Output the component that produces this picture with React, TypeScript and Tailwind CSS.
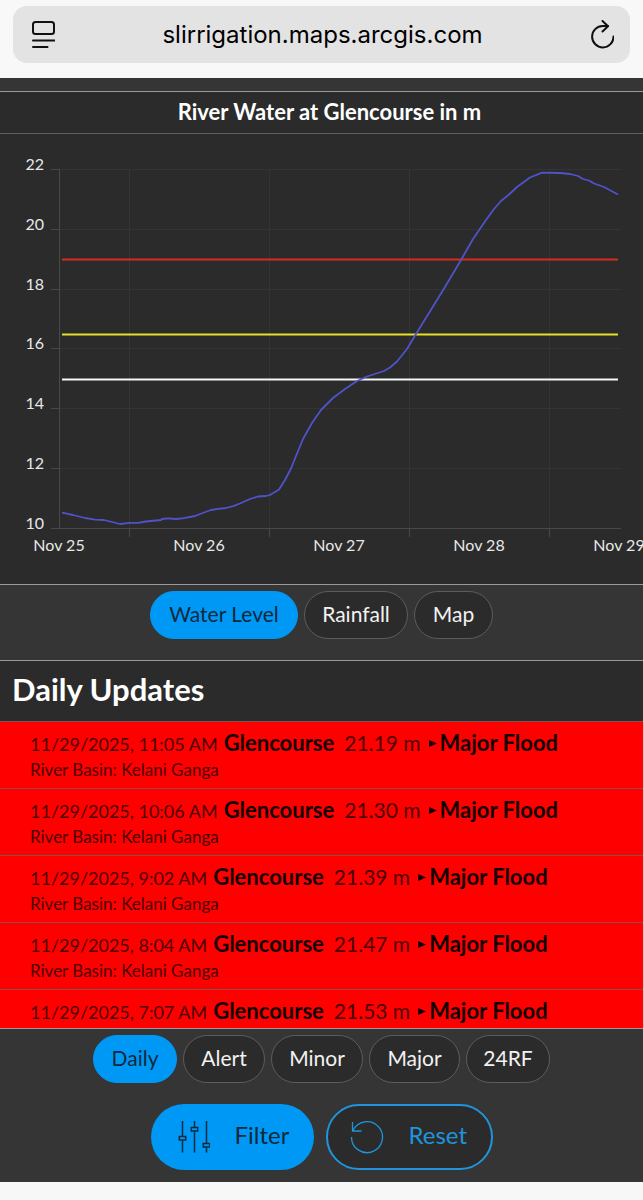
import { useState } from "react";
import clsx from "clsx";

interface Update {
  time: string;
  station: string;
  level: string;
  status: string;
  basin: string;
}

const updates: Update[] = [
  { time: "11/29/2025, 11:05 AM", station: "Glencourse", level: "21.19 m", status: "Major Flood", basin: "Kelani Ganga" },
  { time: "11/29/2025, 10:06 AM", station: "Glencourse", level: "21.30 m", status: "Major Flood", basin: "Kelani Ganga" },
  { time: "11/29/2025, 9:02 AM", station: "Glencourse", level: "21.39 m", status: "Major Flood", basin: "Kelani Ganga" },
  { time: "11/29/2025, 8:04 AM", station: "Glencourse", level: "21.47 m", status: "Major Flood", basin: "Kelani Ganga" },
  { time: "11/29/2025, 7:07 AM", station: "Glencourse", level: "21.53 m", status: "Major Flood", basin: "Kelani Ganga" },
];

const chartTabs = [
  { label: "Water Level", width: "w-[148px]" },
  { label: "Rainfall", width: "w-[104px]" },
  { label: "Map", width: "w-[79px]" },
];

const updateTabs = [
  { label: "Daily", width: "w-[84px]" },
  { label: "Alert", width: "w-[82px]" },
  { label: "Minor", width: "w-[92px]" },
  { label: "Major", width: "w-[91px]" },
  { label: "24RF", width: "w-[84px]" },
];

const yTicks = [
  { label: "22", y: 35 },
  { label: "20", y: 95 },
  { label: "18", y: 155 },
  { label: "16", y: 214 },
  { label: "14", y: 274 },
  { label: "12", y: 334 },
  { label: "10", y: 394 },
];

const xLabels = [
  { label: "Nov 25", x: 59 },
  { label: "Nov 26", x: 199 },
  { label: "Nov 27", x: 339 },
  { label: "Nov 28", x: 479 },
  { label: "Nov 29", x: 619 },
];

const thresholds = [
  { name: "major", y: 125.5, color: "#d92a22" },
  { name: "minor", y: 200.5, color: "#e6df2a" },
  { name: "alert", y: 245.5, color: "#f4f8f8" },
];

const levelLine =
  "62,378.7 73,381 85,384 95,385.7 104,386 112,388 120,390 130,388.8 138,388.8 146,387.5 161,386 162,385 " +
  "168,384.3 176,385 184,384.2 195,382 204,378.5 211,376 218,374.8 226,374 234,371.8 240,369.5 250,365 " +
  "258,362.5 266,362 270,361 279,355.5 285,346 291,334.5 296,322 303,305 312,289 321,276 333,264 345,255 " +
  "357,247 367,242.5 384,237 390,233.5 397,227.5 407,215 416,200 429,179 445,153 461,126 473,105 486,86 " +
  "494,75 501,67 509,60.5 517,53 530,43.5 542,38.7 560,39 570,40 578,42 583,45 589,46.5 594,49.5 604,53 618,60.5";

function AddressBar() {
  return (
    <header className="bg-[#f8f8f8] px-[13px] pb-[15px] pt-1.5">
      <div className="flex h-[57px] items-center rounded-[14px] bg-[#e3e3e3] pl-[18px] pr-4">
        <button type="button" aria-label="Page menu">
          <svg viewBox="0 0 24 30" className="h-[30px] w-6" fill="none" stroke="#111" strokeWidth="2" strokeLinecap="round">
            <rect x="2" y="2" width="21" height="12" rx="2.5" />
            <path d="M2 20.5h21.500M2 27h14.500" />
          </svg>
        </button>
        <input
          type="text"
          aria-label="Address"
          defaultValue="slirrigation.maps.arcgis.com"
          className="min-w-0 flex-1 bg-transparent text-center font-[Inter,sans-serif] text-2xl text-black outline-none"
        />
        <button type="button" aria-label="Reload">
          <svg
            viewBox="0 0 24 30"
            className="h-[30px] w-6"
            fill="none"
            stroke="#111"
            strokeWidth="2"
            strokeLinecap="round"
            strokeLinejoin="round"
          >
            <path d="M23.500 16.500A10.700 10.700 0 1 1 12.800 6H18" />
            <path d="M12.500 1L18 6.200L12.500 11.500" />
          </svg>
        </button>
      </div>
    </header>
  );
}

function LevelChart() {
  return (
    <svg viewBox="0 0 643 450" className="block w-full" role="img" aria-label="River water level, Nov 25 to Nov 29">
      <g stroke="#343434">
        {yTicks.map((t) => (
          <line key={t.label} x1="59" x2="621" y1={t.y + 0.5} y2={t.y + 0.5} />
        ))}
        {[129.5, 269.5, 409.5, 549.5].map((x) => (
          <line key={x} x1={x} x2={x} y1="35" y2="394" />
        ))}
      </g>
      <g stroke="#484848">
        {yTicks.map((t) => (
          <line key={t.label} x1="51" x2="59" y1={t.y + 0.5} y2={t.y + 0.5} />
        ))}
        {[129.5, 269.5, 409.5, 549.5].map((x) => (
          <line key={x} x1={x} x2={x} y1="394" y2="403" />
        ))}
        <path d="M59.500 35V394.500H621" fill="none" />
      </g>
      <g className="fill-[#e8e8e8] text-base">
        {yTicks.map((t) => (
          <text key={t.label} x="44" y={t.y + 1} textAnchor="end">
            {t.label}
          </text>
        ))}
        {xLabels.map((t) => (
          <text key={t.label} x={t.x} y="417" textAnchor="middle">
            {t.label}
          </text>
        ))}
      </g>
      {thresholds.map((t) => (
        <line key={t.name} x1="62" x2="618" y1={t.y} y2={t.y} stroke={t.color} strokeWidth="2" />
      ))}
      <polyline points={levelLine} fill="none" stroke="#5053c8" strokeWidth="1.8" strokeLinejoin="round" />
    </svg>
  );
}

interface TabsProps {
  items: { label: string; width: string }[];
}

function Tabs({ items }: TabsProps) {
  const [active, setActive] = useState(items[0].label);

  return (
    <div className="flex flex-wrap justify-center gap-1.5">
      {items.map(({ label, width }) => (
        <button
          key={label}
          type="button"
          aria-pressed={active === label}
          onClick={() => setActive(label)}
          className={clsx(
            "h-12 rounded-full border pb-0.5 text-[21px]",
            width,
            active === label
              ? "border-[#0098f5] bg-[#0098f5] text-[#10293c]"
              : "border-[#5c5c5c] bg-[#2b2b2b] text-[#f2f2f2]",
          )}
        >
          {label}
        </button>
      ))}
    </div>
  );
}

function UpdateRow({ update }: { update: Update }) {
  return (
    <li className="h-[67px] shrink-0 border-b border-[#855050] bg-[#ff0000] pl-[30px] pt-1.5">
      <div className="flex h-[30px] items-baseline whitespace-nowrap text-[21px] leading-[30px] text-[#4d0000]">
        <span className="text-lg leading-[30px]">{update.time}</span>
        <strong className="ml-1.5 text-[22px] font-bold leading-[30px] text-[#140000]">{update.station}</strong>
        <span className="ml-2.5">{update.level}</span>
        <svg viewBox="0 0 9 8" className="ml-2 mr-0.5 h-2 w-[9px] self-center" aria-hidden="true">
          <path d="M0 1L8 4.500L0 8Z" fill="#140000" />
        </svg>
        <strong className="text-[22px] font-bold leading-[30px] text-[#140000]">{update.status}</strong>
      </div>
      <p className="text-[17px] leading-6 text-[#4d0000]">River Basin: {update.basin}</p>
    </li>
  );
}

export default function App() {
  return (
    <div className="flex h-screen flex-col bg-[#353535] font-[Lato,sans-serif]">
      <AddressBar />
      <main className="flex min-h-0 flex-1 flex-col">
        <section className="mt-[13px] border-y border-[#999] bg-[#2b2b2b]">
          <h1 className="border-b border-[#606060] pb-0.5 pl-4 text-center text-[22px] font-bold leading-[39px] text-white">
            River Water at Glencourse in m
          </h1>
          <LevelChart />
        </section>

        <div className="pb-[21px] pt-1.5">
          <Tabs items={chartTabs} />
        </div>

        <section className="flex min-h-0 flex-1 flex-col border-y border-[#999] bg-[#2b2b2b]">
          <h2 className="border-b border-[#855050] pb-1 pl-3 text-[31px] font-bold leading-[56px] text-white">
            Daily Updates
          </h2>
          <ul className="flex min-h-0 flex-1 flex-col overflow-y-auto [scrollbar-width:none]">
            {updates.map((update) => (
              <UpdateRow key={update.time} update={update} />
            ))}
          </ul>
        </section>

        <div className="pb-3 pt-1.5">
          <Tabs items={updateTabs} />
          <div className="mt-[21px] flex justify-center gap-3 text-2xl">
            <button
              type="button"
              className="flex h-[66px] w-[163px] items-center gap-[25px] rounded-full bg-[#0098f5] pl-[27px] text-[#10293c]"
            >
              <svg viewBox="0 0 32 32" className="size-8" fill="none" stroke="#10293c" strokeWidth="1.5" aria-hidden="true">
                <path d="M4.500 0v15M4.500 19.500v12M16.500 0v6.500M16.500 10.500v21M28.500 0v22.500M28.500 26.500v5" />
                <rect x="1.300" y="15.500" width="6.400" height="3.500" />
                <rect x="13.300" y="6.500" width="6.400" height="3.500" />
                <rect x="25.300" y="22.500" width="6.400" height="3.500" />
              </svg>
              <span className="pb-1">Filter</span>
            </button>
            <button
              type="button"
              className="flex h-[66px] w-[167px] items-center gap-[25px] rounded-full border-2 border-[#2094dc] bg-[#2b2b2b] pl-[22px] text-[#2094dc]"
            >
              <svg viewBox="0 0 34 34" className="size-[34px]" fill="none" stroke="#2094dc" strokeWidth="1.300" aria-hidden="true">
                <path d="M1.500 17A15.500 15.500 0 1 0 3 10.500M2.500 2v9h9" />
              </svg>
              <span className="pb-1">Reset</span>
            </button>
          </div>
        </div>
      </main>
      <footer className="h-[18px] bg-[#f7f7f7]" />
    </div>
  );
}
